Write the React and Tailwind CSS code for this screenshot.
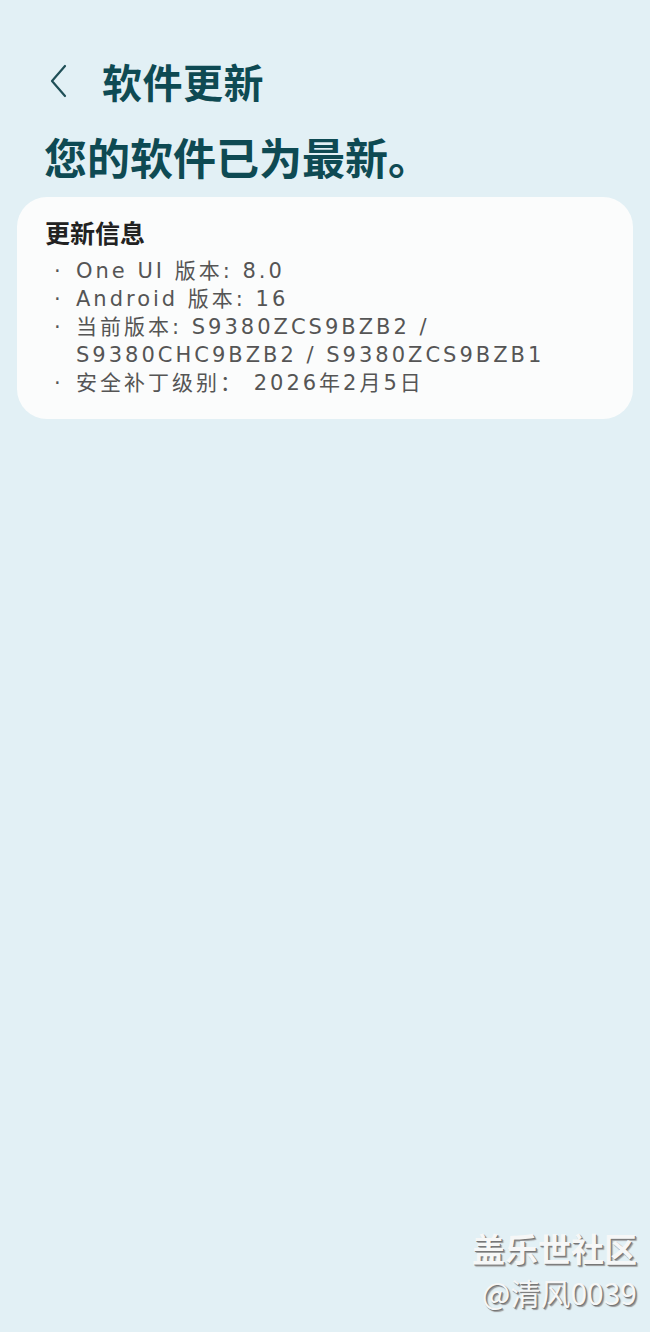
import React from "react";

const cjk = { fontFamily: '"Noto Sans CJK SC", "Noto Sans", sans-serif' };
const mixed = { fontFamily: '"DejaVu Sans", "Noto Sans CJK SC", sans-serif' };

function Item({ children }) {
  return (
    <div className="flex">
      <span className="w-[31px] pl-[9px] shrink-0">·</span>
      <div>{children}</div>
    </div>
  );
}

export default function App() {
  return (
    <div className="min-h-[1332px] w-[650px] bg-[#e2f0f5] relative overflow-hidden" style={cjk}>
      <div className="flex items-center h-[62px] mt-[50px] pl-[44px]">
        <svg width="30" height="34" viewBox="0 0 30 34" className="mr-[28px]">
          <path d="M21 2 L8 17 L21 32" fill="none" stroke="#1f4f57" strokeWidth="2.2" strokeLinecap="round" strokeLinejoin="round" />
        </svg>
        <h1 className="text-[40px] font-bold text-[#0e4a53] leading-none tracking-[0.5px]">软件更新</h1>
      </div>
      <h2 className="pl-[44px] mt-[18px] text-[43px] font-bold text-[#0e4a53] leading-[52px]">
        您的软件已为最新。
      </h2>
      <div className="mx-[17px] mt-[15px] bg-[#fbfcfc] rounded-[30px] pt-[18px] pb-[22px] pl-[28px] pr-[20px]">
        <div className="text-[25px] font-bold text-[#222] leading-[34px]">更新信息</div>
        <div className="mt-[8px] text-[21px] text-[#555] leading-[28px] tracking-[3px]" style={mixed}>
          <Item>One UI 版本: 8.0</Item>
          <Item>Android 版本: 16</Item>
          <Item>
            <div>当前版本: S9380ZCS9BZB2 /</div>
            <div>S9380CHC9BZB2 / S9380ZCS9BZB1</div>
          </Item>
          <Item>安全补丁级别： 2026年2月5日</Item>
        </div>
      </div>
      <div className="absolute right-[13px] top-[1226px] flex flex-col items-end text-[#f6f7f7]">
        <div className="text-[33px] font-bold leading-[44px]" style={{ textShadow: "1px 1px 0 #777, 2px 2px 1px #999" }}>盖乐世社区</div>
        <div className="text-[30px] leading-[44px]" style={{ textShadow: "1px 1px 0 #777, 2px 2px 1px #999" }}>@清风0039</div>
      </div>
    </div>
  );
}
